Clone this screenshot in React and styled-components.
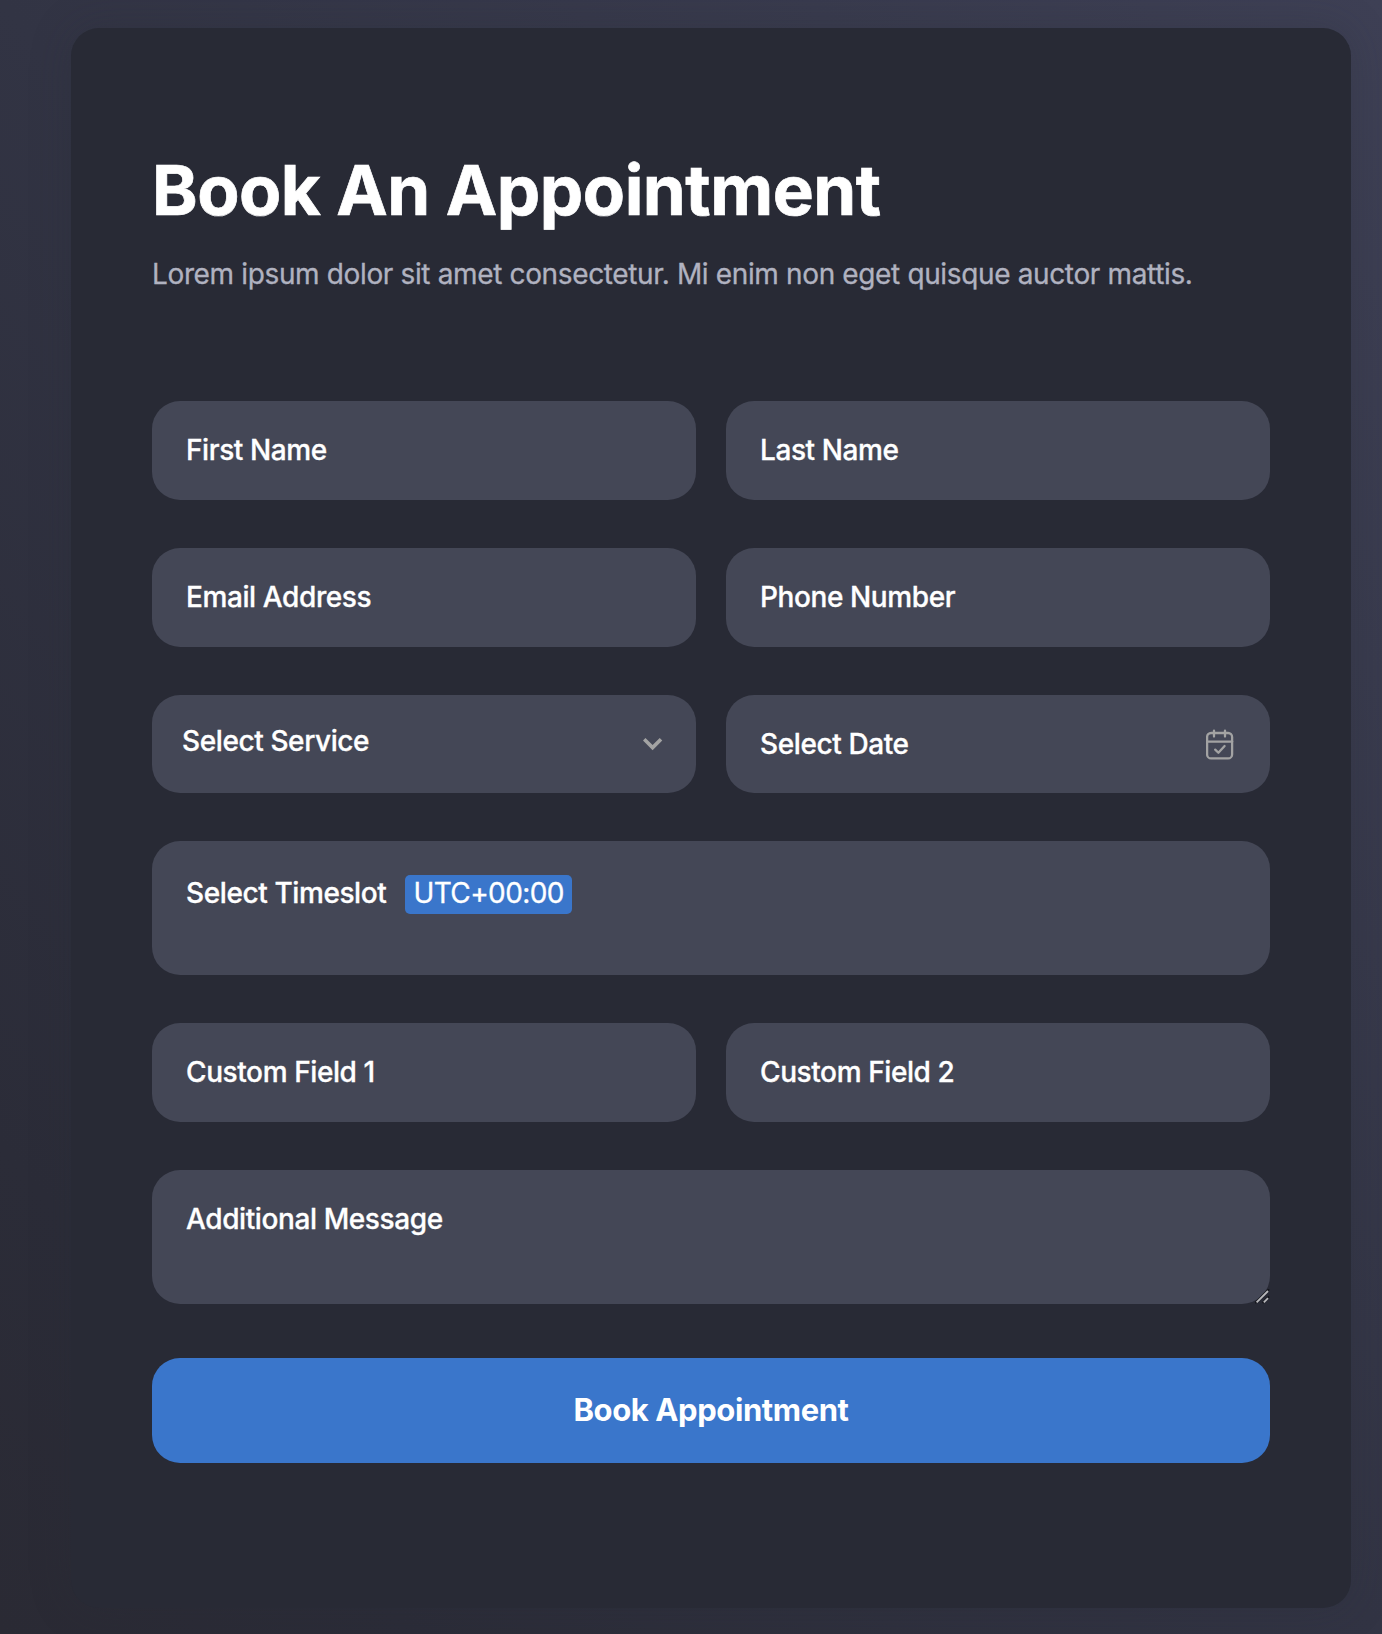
import styled, { createGlobalStyle } from 'styled-components'

const GlobalStyle = createGlobalStyle`
    * {
        box-sizing: border-box;
    }

    body {
        margin: 0;
        font-family: Inter, 'Liberation Sans', sans-serif;
        background: #2a2a35;
    }
`;

function ChevronIcon() {
    return (
        <svg width="20" height="14" viewBox="0 0 20 14" fill="none">
            <path d="M1.2 2.2 L9.6 10.6 L18 2.2" stroke="#a3a3a3" strokeWidth="3.6" />
        </svg>
    )
}

function CalendarIcon() {
    return (
        <svg width="28" height="31" viewBox="0 0 28 31" fill="none" stroke="#a3a3a3" strokeWidth="2.3" strokeLinecap="round" strokeLinejoin="round">
            <rect x="1.1" y="4" width="25" height="25.4" rx="4" />
            <path d="M1 12.6h25.2M8 1.6v6M19 1.6v6" />
            <path d="M9.2 20.6l3.2 3.2 6.2-6.8" />
        </svg>
    )
}

function ResizeGrip() {
    return (
        <Grip width="15" height="15" viewBox="0 0 15 15" fill="none">
            <path d="M0 14L14 0M7.5 14L14 7.5" stroke="#15161c" strokeWidth="1.8" />
            <path d="M1.6 13.4L13 2M8.8 13.4L13 9.2" stroke="#b9b9bc" strokeWidth="1.8" />
        </Grip>
    )
}

function App() {
    return (
        <Page>
            <GlobalStyle />
            <Card>
                <Title>Book An Appointment</Title>
                <Subtitle>Lorem ipsum dolor sit amet consectetur. Mi enim non eget quisque auctor mattis.</Subtitle>
                <Form>
                    <Field>First Name</Field>
                    <Field>Last Name</Field>
                    <Field>Email Address</Field>
                    <Field>Phone Number</Field>
                    <SelectField>
                        <SelectLabel>Select Service</SelectLabel>
                        <ChevronIcon />
                    </SelectField>
                    <DateField>
                        Select Date
                        <CalendarIcon />
                    </DateField>
                    <TimeslotField>
                        Select Timeslot
                        <Timezone>UTC+00:00</Timezone>
                    </TimeslotField>
                    <Field>Custom Field 1</Field>
                    <Field>Custom Field 2</Field>
                    <MessageField>
                        Additional Message
                        <ResizeGrip />
                    </MessageField>
                </Form>
                <SubmitButton type="button">Book Appointment</SubmitButton>
            </Card>
        </Page>
    )
}

const Page = styled.main`
    height: 1634px;
    padding: 28px 31px 26px 71px;
    overflow: hidden;
    background: linear-gradient(to top right, #2a2a34, #2b2c38 15%, #323444 50%, #3e4055);
`;

const Card = styled.section`
    height: 1580px;
    padding: 121px 81px 0;
    border-radius: 28px;
    background: #282a35;
    box-shadow: 0 0 40px rgba(40, 42, 53, 0.25);
`;

const Title = styled.h1`
    margin: 0;
    font-size: 69px;
    font-weight: 700;
    line-height: 83px;
    letter-spacing: -0.47px;
    color: #fff;
    white-space: nowrap;
    -webkit-text-stroke: 0.7px #fff;
`;

const Subtitle = styled.p`
    margin: 25px 0 0;
    font-size: 28px;
    font-weight: 400;
    line-height: 34px;
    letter-spacing: -0.36px;
    color: #b0b2c0;
    white-space: nowrap;
    -webkit-text-stroke: 0.3px #b0b2c0;
`;

const Form = styled.div`
    display: grid;
    grid-template-columns: 1fr 1fr;
    grid-template-rows: 99px 99px 98px 134px 99px 134px;
    gap: 48px 30px;
    margin-top: 110px;
`;

const Field = styled.div`
    display: flex;
    align-items: center;
    padding: 0 34px 1px;
    border-radius: 28px;
    background: #444756;
    color: #fff;
    font-size: 28px;
    font-weight: 500;
    line-height: 34px;
    letter-spacing: -0.4px;
    -webkit-text-stroke: 0.3px #fff;
`;

const SelectField = styled(Field)`
    justify-content: space-between;
    padding: 0 33px 0 30px;
`;

const SelectLabel = styled.span`
    margin-bottom: 7px;
`;

const DateField = styled(Field)`
    justify-content: space-between;
    padding: 0 36px 0 34px;
`;

const TimeslotField = styled(Field)`
    grid-column: 1 / -1;
    align-items: flex-start;
    padding-top: 35px;
`;

const Timezone = styled.span`
    height: 39px;
    margin: -1px 0 0 19px;
    padding: 0 8px;
    border-radius: 5px;
    background: #3a76cb;
    font-weight: 400;
    line-height: 36px;
    letter-spacing: -0.6px;
`;

const MessageField = styled(Field)`
    position: relative;
    grid-column: 1 / -1;
    align-items: flex-start;
    padding-top: 32px;
`;

const Grip = styled.svg`
    position: absolute;
    right: 0;
    bottom: 0;
`;

const SubmitButton = styled.button`
    display: block;
    width: 100%;
    height: 105px;
    margin-top: 54px;
    padding: 0 0 2px;
    border: 0;
    border-radius: 28px;
    background: #3a76cb;
    color: #fff;
    font-family: inherit;
    font-size: 31px;
    font-weight: 700;
    letter-spacing: -0.4px;
`;

export default App
